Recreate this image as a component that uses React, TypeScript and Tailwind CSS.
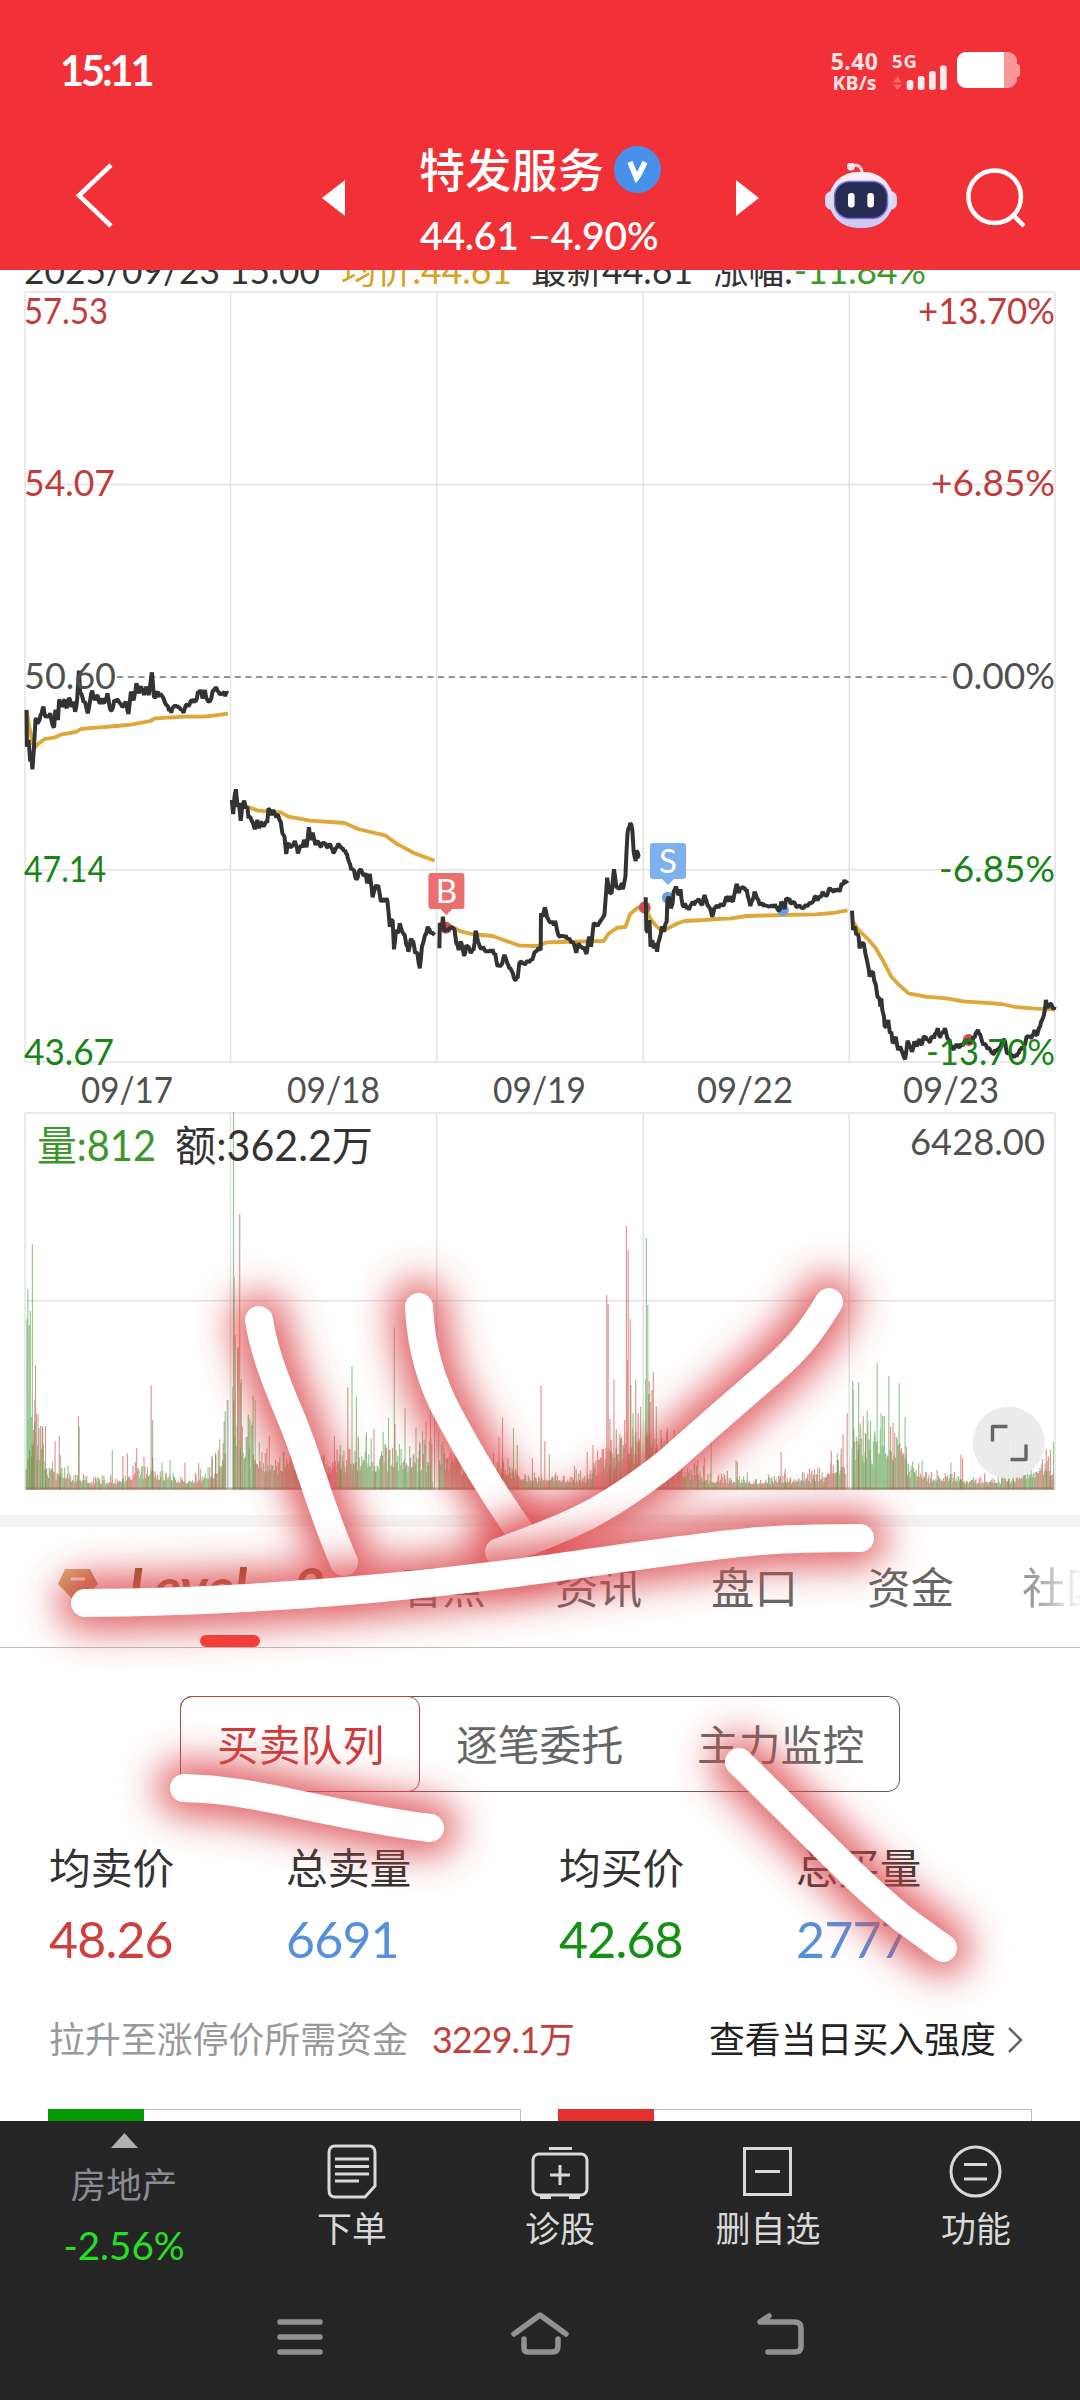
import React from "react";

type Pt = [number, number];

const FONT = "font-['Lato','Noto_Sans_CJK_SC',sans-serif]";

/* ---------- chart data ---------- */

const pts = (s: string): Pt[] =>
  s
    .trim()
    .split(/\s+/)
    .map((p) => p.split(",").map(Number) as Pt);

const SX = 540 / 1568;
const toPage = ([x, y]: Pt): Pt => [x * SX, 640 + y / 3];
const shift = (list: Pt[]): Pt[] => list.map(([x, y]) => [x + 1568, y + 420]);

function random(seed: number) {
  let s = seed;
  return () => {
    s = (s * 16807) % 2147483647;
    return s / 2147483647;
  };
}

const PRICE: Pt[][] = [
  pts(
    "77,210 78,320 83,300 88,365 91,350 94,388 98,330 103,240 112,245 118,225 126,200 130,225 140,230 146,220 150,245 157,262 161,210 168,240 172,178 180,200 188,180 194,205 200,175 208,200 213,185 218,215 224,180 229,92 233,160 240,175 248,190 255,220 262,180 268,152 275,180 283,165 290,190 297,175 303,190 312,160 318,200 325,210 332,180 345,185 355,200 365,185 373,222 380,155 388,180 396,130 404,160 410,140 418,165 425,140 432,165 441,97 447,170 455,160 468,165 478,185 488,200 497,218 505,200 515,198 525,210 533,218 540,195 550,195 560,180 568,185 575,155 582,150 588,175 595,150 602,180 610,182 617,155 627,142 635,155 645,163 660,161"
  ),
  pts(
    "673,480 677,522 681,470 685,448 690,500 694,490 699,542 704,495 709,482 714,505 718,500 722,535 730,540 735,550 740,568 747,540 752,565 760,548 765,560 770,550 776,548 780,505 788,525 793,510 800,525 808,527 815,545 820,580 826,590 831,642 836,612 845,620 856,603 865,640 872,620 878,622 883,600 890,622 897,562 903,600 908,578 916,615 924,605 932,620 942,610 952,622 960,615 968,640 975,625 982,612 992,625 1002,630 1010,655 1020,690 1028,690 1035,718 1045,690 1055,705 1062,700 1066,730 1074,702 1082,772 1090,740 1098,735 1106,785 1116,780 1125,782 1132,860 1140,840 1144,928 1150,870 1155,880 1161,850 1168,875 1175,885 1180,915 1186,935 1192,900 1200,905 1206,940 1212,940 1219,985 1225,920 1234,885 1242,860 1250,880 1262,885"
  ),
  [
    ...pts(
      "1276,925 1277,850 1283,870 1286,830 1290,875 1298,870 1305,865 1313,862 1320,870 1325,910 1332,930 1337,905 1343,925 1348,948 1354,915 1360,920 1367,940 1375,930 1381,872 1388,905 1394,922 1405,925 1415,932 1425,932 1438,940 1445,980 1455,975 1465,945 1473,970 1482,985 1492,1012 1503,1015 1508,970 1520,970 1535,965 1545,960 1555,935 1565,925"
    ),
    ...shift(
      pts(
        "2,510 3,400 8,410 14,382 20,410 28,425 38,430 46,430 53,465 62,465 72,470 85,475 95,485 105,518 112,490 120,500 128,500 135,522 143,470 148,500 156,430 165,435 178,420 183,412 187,405 195,293 200,330 208,340 215,268 222,325 230,325 238,310 240,328 248,290 254,160 262,130 268,150 272,215 278,243 280,212 290,232"
      )
    ),
  ],
  shift(
    pts(
      "307,352 309,450 313,458 318,420 321,500 326,480 330,505 335,490 340,515 346,480 350,465 354,440 360,455 368,425 370,360 374,350 380,385 385,370 388,335 395,320 402,345 408,328 414,375 424,378 433,390 440,372 450,370 458,360 466,370 471,375 478,345 486,375 494,385 500,410 506,385 516,380 525,372 534,375 541,350 548,365 553,348 560,365 565,340 571,312 577,340 584,325 592,325 600,328 607,360 611,378 617,360 623,335 630,355 637,372 645,375 658,375 670,378 685,380 693,392 701,365 710,388 715,355 722,358 730,370 742,375 755,378 765,385 772,375 782,370 792,365 800,350 806,362 813,350 822,335 828,345 836,338 842,325 850,333 860,332 870,335 876,310 884,300 893,310"
    )
  ),
  shift(
    pts(
      "906,392 909,450 914,440 919,465 925,470 928,505 933,490 940,490 945,520 950,545 955,570 957,590 961,573 967,575 970,600 975,615 980,650 986,655 988,680 991,655 994,690 999,710 1001,740 1005,740 1011,720 1016,760 1020,755 1024,790 1028,785 1033,770 1040,810 1046,800 1053,820 1060,838 1067,782 1074,800 1080,815 1087,785 1094,800 1102,778 1108,795 1114,770 1122,775 1130,785 1138,770 1144,775 1150,760 1155,745 1160,770 1168,760 1176,745 1183,775 1190,785 1198,805 1205,800 1215,800 1225,795 1240,780 1255,785 1265,760 1272,750 1280,770 1287,795 1297,800 1310,815 1325,815 1335,800 1348,780 1356,820 1366,820 1376,833 1390,820 1400,800 1408,795 1413,770 1422,770 1430,765 1436,750 1443,765 1452,740 1460,715 1466,690 1469,660 1474,685 1482,672 1488,682 1495,680"
    )
  ),
];

const AVERAGE: Pt[][] = [
  pts(
    "77,210 85,260 93,300 100,325 110,312 130,297 160,292 180,283 210,278 225,274 235,267 280,263 340,258 380,254 437,243 450,235 500,232 540,230 590,230 620,227 662,221"
  ),
  pts("675,490 700,494 718,500 750,512 815,517 838,530 900,542 1000,549 1040,567 1120,587 1150,610 1200,638 1262,662"),
  [
    ...pts("1280,858 1320,865 1340,875 1370,882 1430,888 1470,903 1510,917 1560,918"),
    ...shift(pts("0,495 20,487 60,486 110,485 185,483 200,460 225,443 248,441 262,402 285,382 305,382")),
  ],
  shift(
    pts("307,385 320,415 335,435 350,450 360,452 375,443 400,430 420,423 480,420 510,417 550,416 600,408 700,405 800,403 850,399 893,391")
  ),
  shift(
    pts("906,420 925,450 950,475 975,505 1000,550 1020,590 1045,617 1070,640 1120,650 1180,655 1230,664 1340,672 1380,681 1440,686 1495,688")
  ),
];

const line = (list: Pt[]) => "M" + list.map(([x, y]) => `${x.toFixed(1)} ${y.toFixed(1)}`).join("L");

function jagged(list: Pt[], seed: number): Pt[] {
  const rnd = random(seed);
  const out: Pt[] = [];
  list.forEach((p, i) => {
    out.push(p);
    const n = list[i + 1];
    if (!n) return;
    const steps = Math.floor((n[0] - p[0]) / 2.6);
    for (let k = 1; k < steps; k++) {
      const t = k / steps;
      out.push([p[0] + (n[0] - p[0]) * t, p[1] + (n[1] - p[1]) * t + (rnd() - 0.5) * 14]);
    }
  });
  return out;
}

const ENVELOPE: Pt[] = pts(
  "75,110 84,200 110,190 140,90 200,60 260,35 340,40 400,70 440,80 480,60 540,35 600,60 640,100 655,150 656,0 674,0 675,330 700,220 740,150 770,100 820,110 870,140 950,90 1020,130 1120,140 1200,120 1256,130 1257,0 1273,0 1274,180 1320,120 1400,100 1480,80 1520,40 1600,50 1700,50 1770,140 1830,190 1858,170 1859,0 1872,0 1873,230 1910,190 1960,110 2040,50 2200,35 2400,60 2454,130 2455,0 2472,0 2473,190 2560,200 2610,180 2640,90 2700,50 2900,35 2980,60 3020,90 3059,80"
);

const SPIKES =
  "78,658,g 81,567,g 85,675,g 88,632,g 94,433,g 91,950,g 103,795,r 101,903,r 105,975,r 97,990,r 118,978,r 124,985,r 132,978,r 108,1035,r 172,1008,r 160,1023,r 175,1065,g 228,947,r 230,980,g 326,1050,g 357,1068,r 370,1060,r 397,1045,r 439,856,r 443,960,g 494,1080,g 537,1088,r 577,1090,r 615,1068,r 626,1058,r 638,1017,g 648,1030,r 651,965,g 654,934,g 661,900,n 676,860,g 678,37,g 680,530,g 683,705,r 690,745,g 692,740,r 696,342,r 698,848,r 701,838,g 715,1015,g 722,945,g 730,975,g 735,887,g 741,900,g 775,1045,r 782,1008,r 1010,862,r 1022,798,g 1035,890,g 971,1008,r 988,1035,g 1064,997,g 1086,987,r 1128,953,g 1145,682,g 1147,972,r 1176,925,g 1208,983,g 1219,1025,r 1237,967,r 1250,930,r 1262,950,r 1449,1010,r 1459,953,r 1491,985,g 1502,1035,g 1546,1075,r 1571,857,r 1582,1023,r 1595,1062,g 1705,1055,r 1722,1035,r 1739,1080,r 1749,1047,r 1762,586,r 1766,612,r 1771,957,r 1775,1020,r 1783,838,r 1789,1045,g 1814,960,r 1819,378,r 1822,780,r 1824,450,r 1830,657,r 1832,855,g 1838,940,g 1846,840,r 1853,940,r 1860,920,g 1875,838,g 1877,415,g 1881,615,g 1885,843,r 1888,905,r 1893,870,r 1897,816,r 1906,920,g 1919,990,r 1938,985,r 1958,990,r 1997,1102,g 2026,1080,g 2045,1072,r 2065,1010,g 2137,1080,g 2141,1085,r 2170,1117,g 2268,1057,r 2280,1107,r 2365,1108,r 2414,1053,r 2431,1060,g 2443,1045,r 2448,1003,r 2460,940,r 2476,843,g 2478,870,g 2493,847,g 2498,970,g 2513,1000,g 2518,932,g 2520,963,g 2528,963,g 2540,993,g 2547,790,g 2563,948,g 2568,948,g 2581,828,g 2586,980,r 2593,968,r 2598,1000,r 2611,850,g 2628,951,g 2632,1040,r 2650,1085,g 2721,1110,r 2761,1087,g 2790,1065,r 2795,1075,r 2859,1120,r 2929,1030,g 2942,1020,g 2994,1065,g 3038,1047,r 3050,1050,r 3059,1025,g"
    .split(" ")
    .map((s) => s.split(","));

const BASE = 1489.5;

function volumeBars() {
  const rnd = random(4711);
  const paths: Record<string, string> = { r: "", g: "", n: "" };
  let seg = 0;
  for (let x = 76; x < 3060; x += 2.48) {
    while (seg < ENVELOPE.length - 2 && ENVELOPE[seg + 1][0] < x) seg++;
    const [a, b] = [ENVELOPE[seg], ENVELOPE[seg + 1]];
    const env = a[1] + ((b[1] - a[1]) * (x - a[0])) / (b[0] - a[0]);
    const h = (env * (0.35 + 0.95 * rnd() * rnd() + 0.2 * rnd())) / 3;
    const greenBias = (x > 2472 && x < 2590) || (x > 1020 && x < 1256) ? 0.75 : 0.45;
    if (h > 0.5) paths[rnd() < greenBias ? "g" : "r"] += `M${(x * SX).toFixed(1)} ${BASE}v${(-h).toFixed(1)}`;
    else rnd();
  }
  SPIKES.forEach(([x, y, c]) => {
    paths[c] += `M${(Number(x) * SX).toFixed(1)} ${BASE}V${(1100 + Number(y) / 3).toFixed(1)}`;
  });
  return paths;
}

const VOLUME = volumeBars();

/* ---------- chart ---------- */

type LabelProps = {
  x: number;
  y: number;
  w: number;
  fill: string;
  size?: number;
  children: string;
};

const Label = ({ x, y, w, fill, size = 36, children }: LabelProps) => (
  <text x={x} y={y} fill={fill} fontSize={size} textLength={w} lengthAdjust="spacingAndGlyphs">
    {children}
  </text>
);

const RED = "#c23b3b";
const GREEN = "#178417";
const GRAY = "#505050";
const DAYS_X = [230.5, 436.7, 643.3, 849.2];

function Marker({ x, y, color, letter }: { x: number; y: number; color: string; letter: string }) {
  return (
    <g>
      <path
        d={`M${x - 15} ${y}h30q3 0 3 3v30q0 3 -3 3h-9l-6 6l-6 -6h-9q-3 0 -3 -3v-30q0 -3 3 -3z`}
        fill={color}
      />
      <text x={x} y={y + 30} fontSize={33} fill="#fff" textAnchor="middle">
        {letter}
      </text>
    </g>
  );
}

function StockChart() {
  return (
    <svg className={`block h-[1245px] w-full ${FONT}`} viewBox="0 270 1080 1245">
      <Label x={24} y={284} w={296} fill="#333">2025/09/23 15:00</Label>
      <Label x={341} y={284} w={171} fill="#dba024">均价:44.61</Label>
      <Label x={531} y={284} w={162} fill="#333">最新44.61</Label>
      <Label x={713} y={284} w={80} fill="#333">涨幅:</Label>
      <Label x={794} y={284} w={132} fill="#3c9a2a">-11.84%</Label>

      <g stroke="#e3e3e3" strokeWidth={1.5} fill="none">
        <path d="M25 292H1055V1062H25zM25 484.5H1055M25 869.7H1055" />
        <path d="M25 1113H1055V1489.5H25zM25 1300.7H1055" />
        {DAYS_X.map((x) => (
          <path key={x} d={`M${x} 292V1062M${x} 1113V1489`} />
        ))}
      </g>
      <path d="M117 677H952" stroke="#959595" strokeWidth={2} strokeDasharray="6.2 4.5" />

      <g fill="none" strokeWidth={1.15}>
        <path d={VOLUME.r} stroke="#c8403a" strokeOpacity={0.55} />
        <path d={VOLUME.g} stroke="#3f9a38" strokeOpacity={0.55} />
        <path d={VOLUME.n} stroke="#bbb" strokeWidth={2} />
        <path d="M26 1488.5H1054" stroke="#8a6a50" strokeOpacity={0.5} strokeWidth={2} />
      </g>

      {AVERAGE.map((d, i) => (
        <path key={i} d={line(d.map(toPage))} fill="none" stroke="#dda73a" strokeWidth={3.8} strokeLinejoin="round" />
      ))}
      <g fill="#d2504a">
        <circle cx={446} cy={927.7} r={6} />
        <circle cx={644.7} cy={907.5} r={6} />
        <circle cx={968.7} cy={1040} r={6} />
      </g>
      <g fill="#6b9fe0">
        <circle cx={667.8} cy={897.7} r={6} />
        <circle cx={782.8} cy={910} r={6} />
      </g>
      {PRICE.map((d, i) => (
        <path key={i} d={line(jagged(d, 91 + i).map(toPage))} fill="none" stroke="#333" strokeWidth={4} strokeLinejoin="bevel" />
      ))}
      <Marker x={446.4} y={873} color="#ec6f6f" letter="B" />
      <Marker x={668} y={843} color="#7fb0ee" letter="S" />

      <Label x={24} y={324} w={84} fill={RED}>57.53</Label>
      <Label x={918} y={324} w={137} fill={RED}>+13.70%</Label>
      <Label x={24} y={496} w={91} fill={RED}>54.07</Label>
      <Label x={931} y={496} w={124} fill={RED}>+6.85%</Label>
      <Label x={24} y={689} w={92} fill={GRAY}>50.60</Label>
      <Label x={952} y={689} w={103} fill={GRAY}>0.00%</Label>
      <Label x={24} y={882} w={82} fill={GREEN}>47.14</Label>
      <Label x={939} y={882} w={116} fill={GREEN}>-6.85%</Label>
      <Label x={24} y={1065} w={90} fill={GREEN}>43.67</Label>
      <Label x={926} y={1065} w={129} fill={GREEN}>-13.70%</Label>

      <Label x={81} y={1103} w={92} fill={GRAY}>09/17</Label>
      <Label x={287} y={1103} w={93} fill={GRAY}>09/18</Label>
      <Label x={493} y={1103} w={93} fill={GRAY}>09/19</Label>
      <Label x={697} y={1103} w={96} fill={GRAY}>09/22</Label>
      <Label x={903} y={1103} w={96} fill={GRAY}>09/23</Label>

      <Label x={37} y={1161} w={119} size={42} fill="#3c962c">量:812</Label>
      <Label x={175} y={1161} w={198} size={42} fill="#333">额:362.2万</Label>
      <Label x={910} y={1154.5} w={135} fill={GRAY}>6428.00</Label>

      <circle cx={1008.7} cy={1442.7} r={36} fill="#ebebeb" fillOpacity={0.93} />
      <path d="M992.5 1441.5V1426.5H1007.5M1010.5 1459.5H1026V1444.5" fill="none" stroke="#666" strokeWidth={3.4} strokeLinejoin="round" />
    </svg>
  );
}

/* ---------- header ---------- */

function Robot() {
  return (
    <svg className="h-[66px] w-[74px]" viewBox="824 163 74 66">
      <defs>
        <linearGradient id="shell" x1="0" y1="0" x2="0" y2="1">
          <stop offset="0" stopColor="#fbf3fa" />
          <stop offset="1" stopColor="#c9c6f6" />
        </linearGradient>
      </defs>
      <path d="M851 166q11 -3 11 8" fill="none" stroke="#fbd7e2" strokeWidth={3} />
      <circle cx={851} cy={166.5} r={4} fill="#fbe4ec" />
      <rect x={825} y={191} width={72} height={19} rx={7} fill="#dbd6f8" />
      <rect x={829} y={172} width={64} height={56} rx={28} fill="url(#shell)" />
      <rect x={834.5} y={181.5} width={53} height={37} rx={15} fill="#262b52" stroke="#7a6fe0" strokeWidth={1.5} />
      <rect x={848} y={193} width={6.6} height={14.5} rx={3} fill="#fff" />
      <rect x={867.3} y={193} width={6.6} height={14.5} rx={3} fill="#fff" />
    </svg>
  );
}

function Header() {
  return (
    <header className="h-[270px] bg-[#f23037] text-white">
      <div className="flex h-[142px] items-start justify-between pl-[60px] pr-[60px] pt-[52px]">
        <span className="mt-[-2px] text-[41.5px] font-bold leading-[41px] tracking-[-3.1px]">15:11</span>
        <div className="flex h-[40px] items-start">
          <div className="-ml-[4px] w-[51px] text-center font-['Open_Sans',sans-serif] font-bold text-[#ffe3e4]">
            <div className="text-[23px] leading-[18px] tracking-[0.4px]">5.40</div>
            <div className="mt-[3px] text-[19.5px] leading-[19px]">KB/s</div>
          </div>
          <svg className="ml-[11px] h-[38px] w-[56px] font-['Open_Sans',sans-serif]" viewBox="891 52 56 38">
            <text x={892} y={68} fontSize={18.5} fontWeight={700} fill="#ffe3e4" textLength={25}>5G</text>
            <path d="M893 82.5l4.500 -6l4.500 6zM893 84.500l4.500 5.500l4.500 -5.500z" fill="#f8666c" />
            <g fill="#ffeaeb">
              <rect x={906.700} y={80} width={6.700} height={10} rx={2.500} />
              <rect x={917.800} y={76} width={6.700} height={14} rx={2.500} />
              <rect x={929} y={71} width={6.700} height={19} rx={2.500} />
              <rect x={940} y={65.500} width={6.700} height={24.500} rx={2.500} />
            </g>
          </svg>
          <div className="ml-[10px] flex items-center">
            <div className="flex h-[36px] w-[60px] overflow-hidden rounded-[9px] bg-[#f7969b]">
              <div className="w-[47px] bg-white" />
            </div>
            <div className="h-[13px] w-[3px] rounded-r-[3px] bg-[#f7969b]" />
          </div>
        </div>
      </div>
      <div className="flex h-[128px] items-start">
        <svg className="ml-[74px] mt-[20px] h-[66px] w-[40px]" viewBox="0 0 40 66" fill="none" stroke="#fff" strokeWidth={4.500}>
          <path d="M37 3L5 33.500L37 64" />
        </svg>
        <svg className="ml-[208px] mt-[38px] h-[36px] w-[23px]" viewBox="0 0 23 36">
          <path d="M23 0V36L0 18z" fill="#fff" />
        </svg>
        <div className="ml-[60px] w-[270px] pl-[14px]">
          <div className="flex h-[56px] items-center">
            <span className="w-[184px] shrink-0 whitespace-nowrap text-[46px] font-medium leading-[56px] tracking-[0.300px]">特发服务</span>
            <svg className="mb-[2px] ml-[11px] h-[47px] w-[47px] shrink-0" viewBox="0 0 47 47">
              <circle cx={23.500} cy={23.500} r={23.500} fill="#4990ea" />
              <path d="M16 16L22.500 32Q25 29 31 16" fill="none" stroke="#fff" strokeWidth={5.500} />
            </svg>
          </div>
          <div className="mt-[17px] whitespace-nowrap pl-[1px] text-[39px] font-semibold leading-[40px] tracking-[-0.200px]">44.61 −4.90%</div>
        </div>
        <svg className="ml-[61px] mt-[38px] h-[36px] w-[23px]" viewBox="0 0 23 36">
          <path d="M0 0V36L23 18z" fill="#fff" />
        </svg>
        <div className="ml-[65px] mt-[21px]">
          <Robot />
        </div>
        <svg className="ml-[66px] mt-[24px] h-[64px] w-[64px]" viewBox="964 166 64 64" fill="none" stroke="#fff" strokeWidth={4.500}>
          <circle cx={994.700} cy={196.700} r={26.300} />
          <path d="M1013 215L1024 226" />
        </svg>
      </div>
    </header>
  );
}

/* ---------- quote detail ---------- */

function Tabs() {
  return (
    <nav className="relative flex h-[121px] items-center overflow-hidden border-b-[1.5px] border-[#bdbdbd] pt-[2px] text-[43.500px] text-[#666]">
      <svg className="mb-[2px] ml-[57px] h-[38px] w-[42px] shrink-0" viewBox="0 0 42 38">
        <defs>
          <linearGradient id="gem" x1="0" y1="0" x2="1" y2="1">
            <stop offset="0" stopColor="#dcb57c" />
            <stop offset="1" stopColor="#b5663a" />
          </linearGradient>
        </defs>
        <path d="M8 1H33L41 16L21 37L1 16z" fill="url(#gem)" />
        <path d="M14 11H28" stroke="#fbe8d0" strokeWidth={3} />
      </svg>
      <span className="mb-[2px] ml-[29px] w-[271px] shrink-0 whitespace-nowrap bg-linear-to-b from-[#7c4a20] to-[#c46a3c] bg-clip-text text-[56px] font-bold italic text-transparent">
        Level<span className="tracking-[26px]">-</span>2
      </span>
      <span className="w-[156px] shrink-0">看点</span>
      <span className="w-[156px] shrink-0">资讯</span>
      <span className="w-[156px] shrink-0">盘口</span>
      <span className="w-[155px] shrink-0">资金</span>
      <span className="shrink-0 bg-linear-to-r from-[#999] from-10% to-white to-70% bg-clip-text text-transparent">社区</span>
      <i className="absolute bottom-[0px] left-[200px] h-[12px] w-[60px] rounded-full bg-[#f93c36]" />
    </nav>
  );
}

function Stat({ label, value, color }: { label: string; value: string; color: string }) {
  return (
    <div>
      <div className="text-[41.800px] leading-[48px] text-[#333]">{label}</div>
      <div className={`mt-[19px] text-[50px] leading-[56px] tracking-[-0.800px] ${color}`}>{value}</div>
    </div>
  );
}

function Details() {
  return (
    <section className="h-[473px] overflow-hidden">
      <div className="mx-[180px] mt-[48px] flex h-[96px] rounded-[12px] border border-[#606060] text-[41.800px] leading-[96px] text-[#666]">
        <span className="-m-px w-[240px] rounded-[12px] border border-[#b04844] pl-[36px] text-[#cf3b3a]">买卖队列</span>
        <span className="w-[241px] pl-[37px]">逐笔委托</span>
        <span className="pl-[37px]">主力监控</span>
      </div>
      <div className="mt-[52px] grid grid-cols-[237px_273px_237px_1fr] pl-[49px]">
        <Stat label="均卖价" value="48.26" color="text-[#cf3f3c]" />
        <Stat label="总卖量" value="6691" color="text-[#5491da]" />
        <Stat label="均买价" value="42.68" color="text-[#149014]" />
        <Stat label="总买量" value="2777" color="text-[#5491da]" />
      </div>
      <div className="mt-[46px] flex h-[54px] items-center pl-[49px] text-[35.900px]">
        <span className="text-[#999]">拉升至涨停价所需资金</span>
        <span className="ml-[24px] tracking-[-0.900px] text-[#c33f3c]">3229.1万</span>
        <span className="ml-auto text-[#222]">查看当日买入强度</span>
        <svg className="ml-[10px] mr-[56px] h-[28px] w-[18px]" viewBox="0 0 18 28" fill="none" stroke="#666" strokeWidth={2.500}>
          <path d="M3 2L15 14L3 26" />
        </svg>
      </div>
      <div className="mt-[42px] flex gap-[37px] pl-[48px]">
        <div className="h-[30px] w-[473px] border border-[#bbb]">
          <div className="-ml-px -mt-px h-[30px] w-[96px] bg-[#049a04]" />
        </div>
        <div className="h-[30px] w-[474px] border border-[#bbb]">
          <div className="-ml-px -mt-px h-[30px] w-[96px] bg-[#e63030]" />
        </div>
      </div>
    </section>
  );
}

/* ---------- bottom bars ---------- */

function BarItem({ label, children }: { label: string; children: React.ReactNode }) {
  return (
    <div className="flex w-[208px] flex-col items-center pt-[22px]">
      <svg className="h-[58px] w-[60px]" viewBox="0 0 60 58" fill="none" stroke="#d9d9d9" strokeWidth={3}>
        {children}
      </svg>
      <span className="mt-[5px] text-[35px] leading-[44px] text-[#d8d8d8]">{label}</span>
    </div>
  );
}

function BottomBars() {
  return (
    <footer className="h-[279px] bg-[#252525]">
      <div className="flex h-[170px]">
        <div className="flex w-[248px] flex-col items-center pt-[12px]">
          <svg className="h-[15px] w-[27px]" viewBox="0 0 27 15">
            <path d="M13.500 0L27 15H0z" fill="#b0b0b0" />
          </svg>
          <span className="mt-[17px] text-[35.500px] leading-[40px] text-[#8b8b95]">房地产</span>
          <span className="mt-[20px] text-[38.500px] leading-[40px] text-[#25e025]">-2.56%</span>
        </div>
        <BarItem label="下单">
          <path d="M13 3H47Q53 3 53 10V43L43 54H13Q7 54 7 47V10Q7 3 13 3z" />
          <path d="M13 16H47M13 23.500H47M13 31H47M13 38H37" />
        </BarItem>
        <BarItem label="诊股">
          <path d="M19 5.500H42" />
          <rect x={3} y={11} width={54} height={41} rx={6} />
          <path d="M20 32H40M30 22V42" />
          <path d="M10 54H21M39 54H50" strokeWidth={4} />
        </BarItem>
        <BarItem label="删自选">
          <rect x={6.500} y={5.500} width={46} height={46} />
          <path d="M17 28.500H42" />
        </BarItem>
        <BarItem label="功能">
          <circle cx={29.500} cy={28.500} r={24.500} />
          <path d="M18 21.500H41M18 36H41" />
        </BarItem>
      </div>
      <svg className="block h-[109px] w-full" viewBox="0 2291 1080 109" fill="none" stroke="#929292" strokeWidth={5.500} strokeLinecap="round" strokeLinejoin="round">
        <path d="M280 2322H320M280 2337H320M280 2352H320" />
        <path d="M514 2334L540 2315L566 2334M524 2339V2348Q524 2352 528 2352H552Q558 2352 558 2346V2339" />
        <path d="M769 2316L760 2322H794Q801 2322 801 2328V2346Q801 2352 795 2352H768" />
      </svg>
    </footer>
  );
}

/* ---------- marker pen strokes ---------- */

const STROKES = [
  "M259 1320C264 1352 276 1382 292 1420C308 1458 320 1508 344 1562",
  "M419 1307C421 1350 432 1385 450 1417C472 1458 496 1500 532 1548",
  "M829 1302C812 1330 800 1346 774 1369L712 1423L668 1462C600 1516 565 1528 499 1552",
  "M85 1603C240 1602 380 1590 500 1575C600 1562 690 1547 760 1541Q800 1538 860 1538",
  "M184 1788C262 1790 320 1814 430 1828",
  "M739 1762L835 1857Q870 1892 903 1919L943 1948",
];

function PenStrokes() {
  return (
    <svg className="pointer-events-none absolute inset-0 h-[2400px] w-[1080px]" viewBox="0 0 1080 2400" fill="none" strokeLinecap="round" strokeLinejoin="round">
      <defs>
        <filter id="glow" filterUnits="userSpaceOnUse" x="0" y="1100" width="1080" height="1000">
          <feGaussianBlur stdDeviation="19" />
        </filter>
      </defs>
      {STROKES.map((d) => (
        <g key={d}>
          <path d={d} stroke="#dc4a50" strokeOpacity={0.9} strokeWidth={54} filter="url(#glow)" />
          <path d={d} stroke="#fff" strokeWidth={28} />
        </g>
      ))}
    </svg>
  );
}

export default function App() {
  return (
    <div className={`relative h-[2400px] w-[1080px] overflow-hidden bg-white ${FONT}`}>
      <Header />
      <StockChart />
      <div className="h-[12px] bg-[#f4f4f4]" />
      <Tabs />
      <Details />
      <BottomBars />
      <PenStrokes />
    </div>
  );
}
